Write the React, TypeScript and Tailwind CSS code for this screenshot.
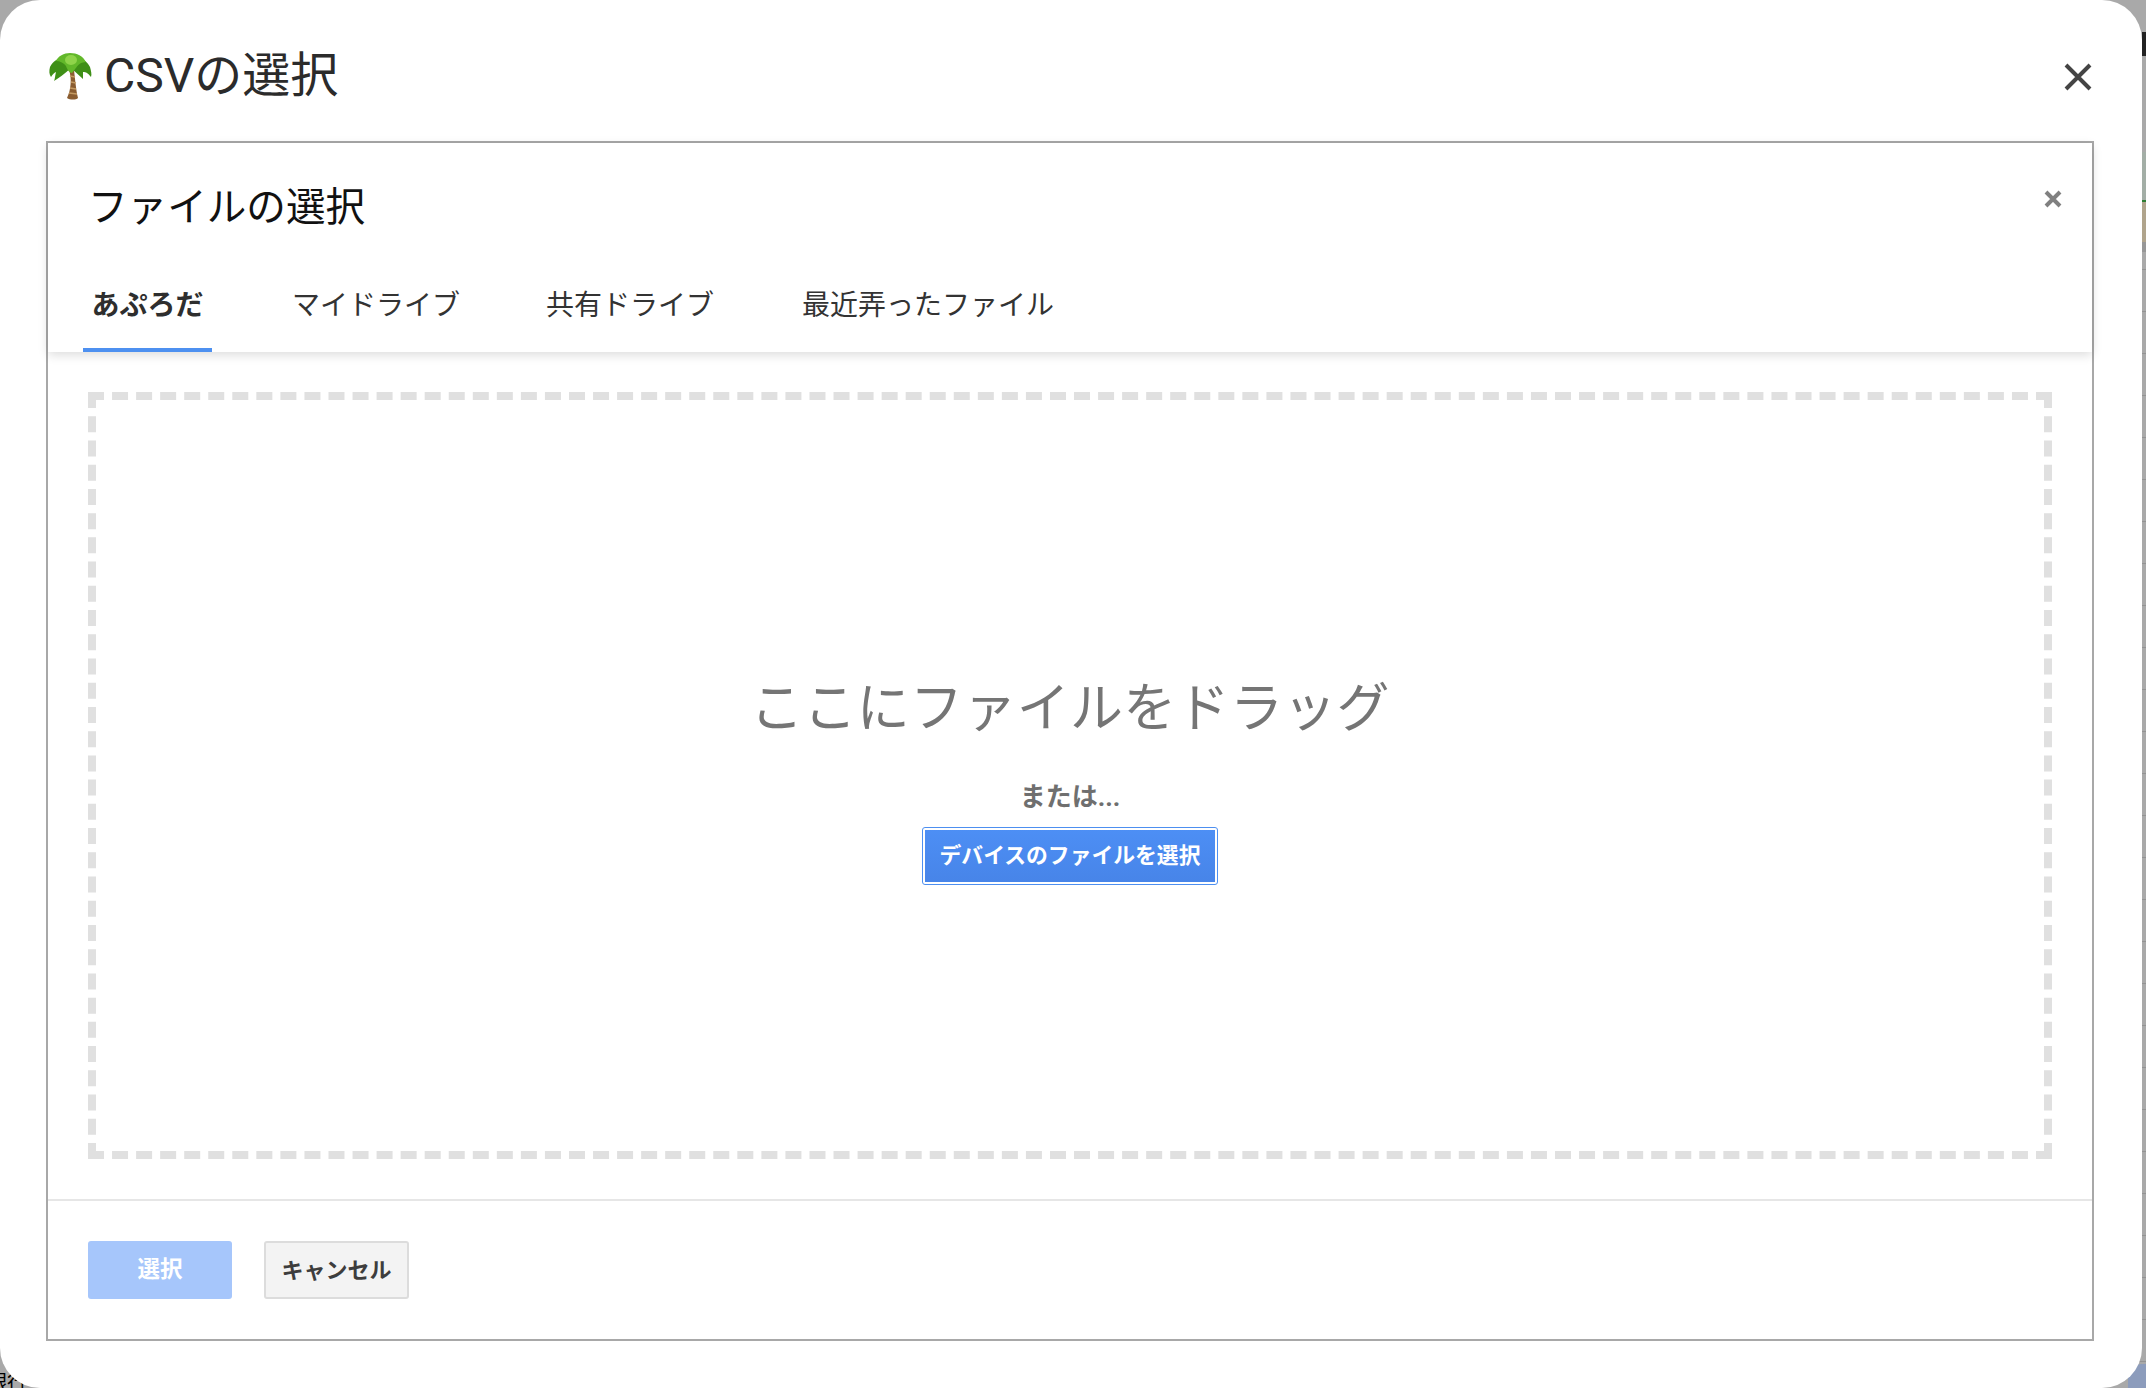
const cjk = "font-['Roboto','Noto_Sans_CJK_JP',sans-serif]";

const rightStripTicks = [269, 311, 353, 395, 437, 479, 521, 563, 605, 647, 689, 731, 773, 815, 857, 899, 941, 983, 1025, 1067, 1109, 1151, 1193, 1235, 1277, 1319];

function PalmIcon() {
  return (
    <svg width="44" height="48" viewBox="0 0 44 48" className="shrink-0">
      <path d="M21 18 C24 26 23 38 19 46 C22 48 28 48 30 46 C28 38 27 26 26 18 Z" fill="#8a5c30" />
      <path d="M22 24 L27 25 M23 30 L28 31 M22 36 L28 37 M21 41 L29 42" stroke="#c49a62" strokeWidth="1.500" />
      <path d="M22 8 C14 4 6 7 2 15 C1 19 1 22 3 25 C5 22 6 21 8 20 C7 24 7 27 6 29 C11 26 16 22 23 16 Z" fill="#3f8f17" />
      <path d="M22 8 C30 4 38 7 42 15 C43 19 44 22 43 25 C40 21 38 20 35 20 C35 22 35 25 35 27 C31 23 27 20 23 16 Z" fill="#3f8f17" />
      <path d="M22 1 C16 1 10 4 8 9 C12 9 16 11 18 14 C19 17 21 21 24 21 C27 18 29 13 33 11 C36 10 38 10 38 10 C35 4 29 1 22 1 Z" fill="#62b82a" />
      <ellipse cx="23" cy="8" rx="6" ry="5" fill="#8fd44a" />
    </svg>
  );
}

function DashedZone() {
  return (
    <div className="flex-1 flex flex-col items-center border-[8px] border-dashed border-[#e0e0e0] pt-[273px]">
      <div className="text-[53px] leading-[72px] text-[#757575] tracking-[0.300px]">
        ここにファイルをドラッグ
      </div>
      <div className="mt-[35px] text-[26px] leading-[34px] font-bold text-[#6f6f6f]">または...</div>
      <button className="mt-[13px] h-[58px] w-[296px] rounded-[3px] bg-linear-to-b from-[#4d8ff5] to-[#4784e8] border border-[#4d8ff0] outline-2 -outline-offset-[3px] outline-white text-white text-[21.800px] font-bold">
        デバイスのファイルを選択
      </button>
    </div>
  );
}

export default function App() {
  return (
    <div className={`relative h-[1388px] w-[2146px] overflow-hidden bg-[#a9a9a9] ${cjk}`}>
      {/* page behind the modal */}
      <div className="absolute left-[-13px] top-[1373px] text-[20px] leading-none text-black">銀行</div>
      <div className="absolute right-0 top-[32px] w-[4px] h-[24px] bg-[#222]" />
      <div className="absolute right-0 top-[152px] w-[4px] h-[48px] bg-[#a3aea6]" />
      <div className="absolute right-0 top-[200px] w-[4px] h-[2px] bg-[#2e7d32]" />
      <div className="absolute right-0 top-[202px] w-[4px] h-[40px] bg-[#b0a48c]" />
      <div className="absolute right-0 top-[242px] w-[4px] h-[10px] bg-[#979797]" />
      {rightStripTicks.map((y) => (
        <div key={y} className="absolute right-0 w-[4px] h-[1px] bg-[#939393]" style={{ top: y }} />
      ))}
      <div className="absolute right-0 top-[1361px] w-[12px] h-[1px] bg-[#939393]" />
      <div className="absolute right-0 bottom-0 w-[18px] h-[24px] rounded-tl-[14px] bg-[#8c9cbc]" />

      <div className="relative h-full w-[2142px] rounded-[40px] bg-white flex flex-col pl-[46px] pr-[48px] pb-[47px]">
        <div className="h-[141px] shrink-0 flex items-center pt-[10px]">
          <div className="flex items-center gap-[12px] ml-[2px]">
            <PalmIcon />
            <span className="text-[48px] leading-[56px] text-[#2b2b2b]">CSVの選択</span>
          </div>
          <svg width="30" height="30" viewBox="0 0 30 30" className="ml-auto mr-[1px] mt-[2px]">
            <path d="M3 3 L27 27 M27 3 L3 27" stroke="#444" strokeWidth="4" />
          </svg>
        </div>

        <div className="flex-1 min-h-0 flex flex-col border-2 border-[#a8a8a8]">
          <div className="relative h-[209px] shrink-0 px-[40px] shadow-[0_3px_10px_rgba(0,0,0,0.14)]">
            <div className="pt-[37px] text-[39.600px] leading-[56px] text-[#111]">ファイルの選択</div>
            <svg width="18" height="18" viewBox="0 0 18 18" className="absolute right-[30px] top-[47px]">
              <path d="M2 2 L16 16 M16 2 L2 16" stroke="#808080" strokeWidth="4" />
            </svg>
            <div className="absolute left-[35px] bottom-0 flex h-[70px] text-[28px] leading-[48px] text-[#333]">
              <div className="w-[129px] border-b-4 border-[#4d90f0] text-center font-bold text-[#2e2e2e]">あぷろだ</div>
              <div className="ml-[80px]">マイドライブ</div>
              <div className="ml-[86px]">共有ドライブ</div>
              <div className="ml-[88px]">最近弄ったファイル</div>
            </div>
          </div>

          <div className="flex-1 min-h-0 flex flex-col px-[40px] py-[40px]">
            <DashedZone />
          </div>

          <div className="h-[140px] shrink-0 border-t-2 border-[#e6e6e6] flex items-start gap-[32px] px-[40px] pt-[40px]">
            <button className="h-[58px] w-[144px] rounded-[3px] bg-[#a6c6fb] text-white text-[22.500px] font-bold">選択</button>
            <button className="h-[58px] w-[145px] rounded-[3px] border-2 border-[#dcdcdc] bg-[#f3f3f3] text-[#3d3d3d] text-[22px] font-bold">キャンセル</button>
          </div>
        </div>
      </div>
    </div>
  );
}
